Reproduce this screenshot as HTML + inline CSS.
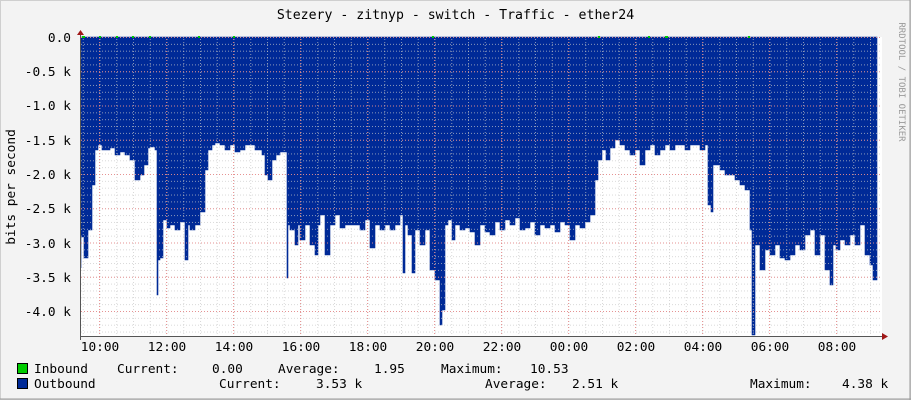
<!DOCTYPE html>
<html><head><meta charset="utf-8"><style>
html,body{margin:0;padding:0;background:#f3f3f3}
svg{display:block}
text{font-family:"DejaVu Sans Mono","Liberation Mono",monospace;fill:#000}
</style></head><body>
<svg width="911" height="400" viewBox="0 0 911 400" xmlns="http://www.w3.org/2000/svg">
<defs>
<pattern id="vmin" x="82.75" y="0" width="16.75" height="400" patternUnits="userSpaceOnUse"><line x1="0.5" y1="0" x2="0.5" y2="400" stroke="#c8c8c8" stroke-dasharray="1,2"/></pattern>
<pattern id="hmin" x="0" y="37" width="911" height="6.85" patternUnits="userSpaceOnUse"><line x1="0" y1="0.5" x2="911" y2="0.5" stroke="#c8c8c8" stroke-dasharray="1,2"/></pattern>
<pattern id="vmaj" x="99" y="0" width="67" height="400" patternUnits="userSpaceOnUse"><line x1="0.5" y1="0" x2="0.5" y2="400" stroke="#e88080" stroke-dasharray="1,2"/></pattern>
<pattern id="hmaj" x="0" y="37" width="911" height="34.25" patternUnits="userSpaceOnUse"><line x1="0" y1="0.5" x2="911" y2="0.5" stroke="#e88080" stroke-dasharray="1,2"/></pattern>
</defs>
<rect x="0" y="0" width="911" height="400" fill="#f3f3f3"/>
<rect x="0.5" y="0.5" width="910" height="399" fill="none" stroke="#cfcfcf"/>
<line x1="0" y1="399" x2="911" y2="399" stroke="#9a9a9a"/>
<line x1="910" y1="0" x2="910" y2="400" stroke="#9a9a9a"/>
<rect x="81" y="37" width="801" height="299" fill="#fff"/>
<polygon id="area" fill="#002a97" stroke="#002a97" stroke-width="0.6" stroke-linejoin="miter" points="81,37 877,37 877,280 876,280 873,265 870,255 865,225 860,245 855,235 850,245 845,240 840,250 836,245 833,285 830,270 825,235 820,255 815,230 810,235 805,250 800,245 795,255 790,260 785,258 780,245 775,255 770,250 765,270 760,245 757,245 755,335 752,230 750,190 745,185 740,180 735,175 730,175 725,170 720,165 716,165 713,212 711,205 708,145 705,150 700,145 695,145 690,150 685,145 680,145 675,150 670,145 665,150 660,155 655,145 650,150 645,165 640,150 635,155 630,150 625,145 620,140 615,148 610,160 606,150 602,160 598,180 595,215 590,222 585,228 580,225 575,240 570,225 565,222 560,232 555,225 550,228 545,225 540,235 535,222 530,228 525,230 520,218 515,225 510,220 505,230 500,222 495,235 490,232 485,225 480,245 475,232 470,228 465,230 460,225 455,240 452,220 448,225 445,310 442,325 440,280 435,270 430,230 425,245 420,230 415,273 412,235 408,225 405,273 403,215 400,225 395,230 390,225 385,230 380,225 375,248 370,220 365,230 360,225 355,225 350,225 345,228 340,215 335,225 330,255 325,215 320,225 318,255 315,245 310,225 305,240 300,225 298,245 295,230 290,225 288,278 287,152 280,155 276,160 272,180 268,175 265,155 262,150 255,145 250,145 245,150 240,152 235,145 230,150 225,145 220,143 215,145 212,150 208,170 205,212 200,225 195,230 190,225 188,260 185,222 180,230 175,225 170,228 167,220 163,258 160,260 158,295 157,150 155,147 150,148 148,165 144,175 140,180 135,160 130,155 125,152 120,155 115,148 110,150 106,150 102,145 98,150 95,185 92,230 88,258 84,237 81,268"/>
<rect x="81" y="37" width="801" height="299" fill="url(#hmin)" opacity="0.7"/>
<rect x="81" y="37" width="801" height="299" fill="url(#vmin)" opacity="0.7"/>
<rect x="81" y="37" width="801" height="299" fill="url(#hmaj)" opacity="0.8"/>
<rect x="81" y="37" width="801" height="299" fill="url(#vmaj)" opacity="0.8"/>
<line x1="81" y1="336.5" x2="884" y2="336.5" stroke="#555"/>
<line x1="80.5" y1="32" x2="80.5" y2="340" stroke="#555"/>
<polygon points="77,35 84,35 80.5,30" fill="#a01818"/>
<polygon points="882,333 882,340 888,336.5" fill="#a01818"/>
<g stroke="#00cc00" stroke-width="2">
<line x1="82" y1="37" x2="85" y2="37"/><line x1="99" y1="37" x2="101" y2="37"/><line x1="116" y1="37" x2="118" y2="37"/><line x1="132" y1="37" x2="134" y2="37"/><line x1="149" y1="37" x2="151" y2="37"/><line x1="198" y1="37" x2="200" y2="37"/><line x1="233" y1="37" x2="235" y2="37"/><line x1="432" y1="37" x2="434" y2="37"/><line x1="598" y1="37" x2="600" y2="37"/><line x1="648" y1="37" x2="650" y2="37"/><line x1="665" y1="37" x2="668" y2="37"/><line x1="748" y1="37" x2="750" y2="37"/>
</g>
<text x="455.5" y="19" font-size="13.2" text-anchor="middle">Stezery - zitnyp - switch - Traffic - ether24</text>
<g font-size="12.8" text-anchor="end">
<text x="71" y="42">0.0</text>
<text x="71" y="76">-0.5 k</text>
<text x="71" y="110">-1.0 k</text>
<text x="71" y="145">-1.5 k</text>
<text x="71" y="179">-2.0 k</text>
<text x="71" y="213">-2.5 k</text>
<text x="71" y="248">-3.0 k</text>
<text x="71" y="282">-3.5 k</text>
<text x="71" y="316">-4.0 k</text>
</g>
<text transform="translate(15,187) rotate(-90)" font-size="12.8" text-anchor="middle">bits per second</text>
<text transform="translate(899,82) rotate(90)" font-size="9" style="fill:#999" text-anchor="middle">RRDTOOL / TOBI OETIKER</text>
<g font-size="12.8" text-anchor="middle">
<text x="100" y="351">10:00</text><text x="167" y="351">12:00</text><text x="234" y="351">14:00</text><text x="301" y="351">16:00</text><text x="368" y="351">18:00</text><text x="435" y="351">20:00</text><text x="502" y="351">22:00</text><text x="569" y="351">00:00</text><text x="636" y="351">02:00</text><text x="703" y="351">04:00</text><text x="770" y="351">06:00</text><text x="837" y="351">08:00</text>
</g>
<rect x="17.5" y="363.5" width="10" height="10" fill="#00cc00" stroke="#000"/>
<rect x="17.5" y="378.5" width="10" height="10" fill="#002a97" stroke="#000"/>
<g font-size="12.8">
<text x="34" y="373">Inbound</text>
<text x="117" y="373">Current:</text>
<text x="212" y="373">0.00</text>
<text x="278" y="373">Average:</text>
<text x="374" y="373">1.95</text>
<text x="441" y="373">Maximum:</text>
<text x="530" y="373">10.53</text>
<text x="34" y="388">Outbound</text>
<text x="219" y="388">Current:</text>
<text x="316" y="388">3.53 k</text>
<text x="485" y="388">Average:</text>
<text x="572" y="388">2.51 k</text>
<text x="750" y="388">Maximum:</text>
<text x="842" y="388">4.38 k</text>
</g>
</svg>
<script>
(function(){try{var p=document.getElementById('area');var a=p.getAttribute('points').trim().split(/\s+/).map(function(s){return s.split(',').map(Number)});
var out=[a[0].join(','),a[1].join(',')];var rest=a.slice(2);out.push(rest[0].join(','));
for(var i=1;i<rest.length;i++){var prev=rest[i-1],c=rest[i];out.push(c[0]+','+prev[1]);out.push(c[0]+','+c[1]);}
p.setAttribute('points',out.join(' '));}catch(e){}})();
</script>
</body></html>
